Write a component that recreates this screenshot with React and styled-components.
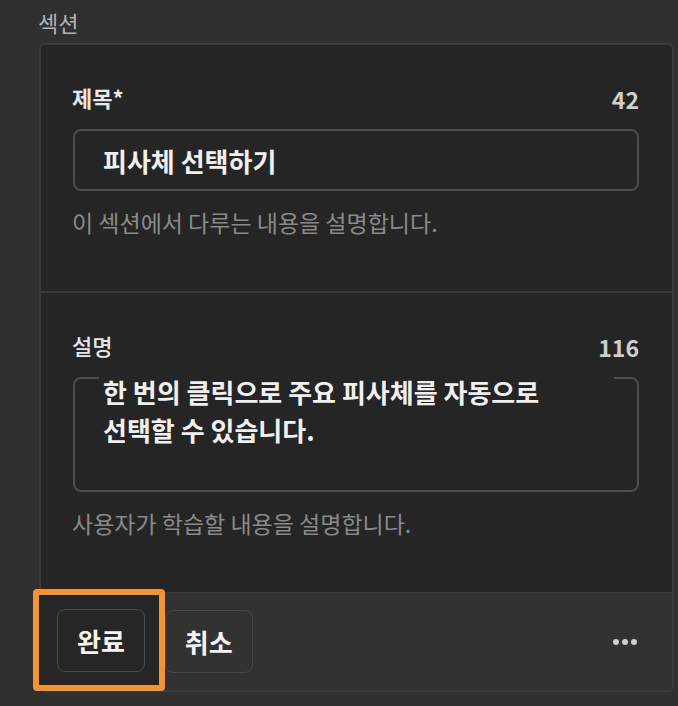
import React from 'react';
import styled, { createGlobalStyle } from 'styled-components';

const GlobalStyle = createGlobalStyle`
html, body {
    margin: 0;
    padding: 0;
    background-color: #303030;
}
body {
    font-family: "Noto Sans CJK KR", "Noto Sans", sans-serif;
    color: #e6e6e6;
}
* {
    box-sizing: border-box;
}
`;

const Page = styled.div`
width: 678px;
height: 706px;
padding-top: 8px;
overflow: hidden;
`;

const SectionLabel = styled.div`
margin-left: 38px;
margin-bottom: 7px;
font-size: 22px;
line-height: 28px;
color: #b3b3b3;
`;

const Panel = styled.div`
margin: 0 4px 0 39px;
border: 2px solid #3b3b3b;
border-radius: 6px;
background-color: #323232;
`;

const Field = styled.div`
padding: 38px 33px 55px 31px;
background-color: #252525;
border-top: ${(props) => (props.$divided ? '2px solid #3a3a3a' : 'none')};
border-radius: ${(props) => (props.$divided ? '0' : '4px 4px 0 0')};
`;

const FieldHeader = styled.div`
display: flex;
justify-content: space-between;
align-items: center;
height: 28px;
margin-bottom: 18px;
`;

const Label = styled.div`
font-size: 22px;
line-height: 28px;
font-weight: ${(props) => (props.$strong ? 700 : 500)};
color: #e8e8e8;
`;

const Count = styled.div`
padding-top: 4px;
font-size: 23px;
line-height: 28px;
font-weight: 700;
color: #cfcfcf;
`;

const Input = styled.div`
display: flex;
align-items: center;
height: 62px;
margin-left: 1px;
padding-left: 28px;
border: 2px solid #4e4e4e;
border-radius: 8px;
font-size: 26px;
font-weight: 700;
color: #f0f0f0;
`;

const TextArea = styled.div`
height: 115px;
margin-left: 1px;
border: 2px solid #4e4e4e;
border-radius: 8px;
`;

const TextAreaValue = styled.div`
width: 515px;
margin: -6px 0 0 24px;
padding-left: 4px;
background-color: #252525;
font-size: 26px;
line-height: 38px;
font-weight: 700;
color: #f0f0f0;
`;

const Helper = styled.div`
margin-top: 17px;
font-size: 23px;
line-height: 28px;
color: #8a8a8a;
`;

const Footer = styled.div`
display: flex;
align-items: stretch;
height: 98px;
padding-right: 35px;
border-top: 1px solid #3a3a3a;
`;

const FocusFrame = styled.div`
display: flex;
align-items: center;
margin: -4px 0 -1px -8px;
padding: 0 14px 0 18px;
border: 6px solid #f29434;
border-radius: 4px;
background-color: #262626;
`;

const Button = styled.button`
height: 63px;
padding: 0 19px;
align-self: center;
border: 1px solid #4a4a4a;
border-radius: 8px;
background-color: transparent;
font-family: "Noto Sans CJK KR", "Noto Sans", sans-serif;
font-size: 26px;
font-weight: 700;
color: #f4f4f4;
`;

const MoreButton = styled.div`
margin-left: auto;
align-self: center;
display: flex;
gap: 3px;
padding-top: 1px;
`;

const Dot = styled.span`
width: 6px;
height: 6px;
border-radius: 3px;
background-color: #cfcfcf;
`;

const App = () => {
    return (
        <Page>
            <GlobalStyle />
            <SectionLabel>섹션</SectionLabel>
            <Panel>
                <Field>
                    <FieldHeader>
                        <Label $strong>제목*</Label>
                        <Count>42</Count>
                    </FieldHeader>
                    <Input>피사체 선택하기</Input>
                    <Helper>이 섹션에서 다루는 내용을 설명합니다.</Helper>
                </Field>
                <Field $divided>
                    <FieldHeader>
                        <Label>설명</Label>
                        <Count>116</Count>
                    </FieldHeader>
                    <TextArea>
                        <TextAreaValue>
                            한 번의 클릭으로 주요 피사체를 자동으로<br />
                            선택할 수 있습니다.
                        </TextAreaValue>
                    </TextArea>
                    <Helper>사용자가 학습할 내용을 설명합니다.</Helper>
                </Field>
                <Footer>
                    <FocusFrame>
                        <Button>완료</Button>
                    </FocusFrame>
                    <Button>취소</Button>
                    <MoreButton>
                        <Dot />
                        <Dot />
                        <Dot />
                    </MoreButton>
                </Footer>
            </Panel>
        </Page>
    );
};

export default App;
